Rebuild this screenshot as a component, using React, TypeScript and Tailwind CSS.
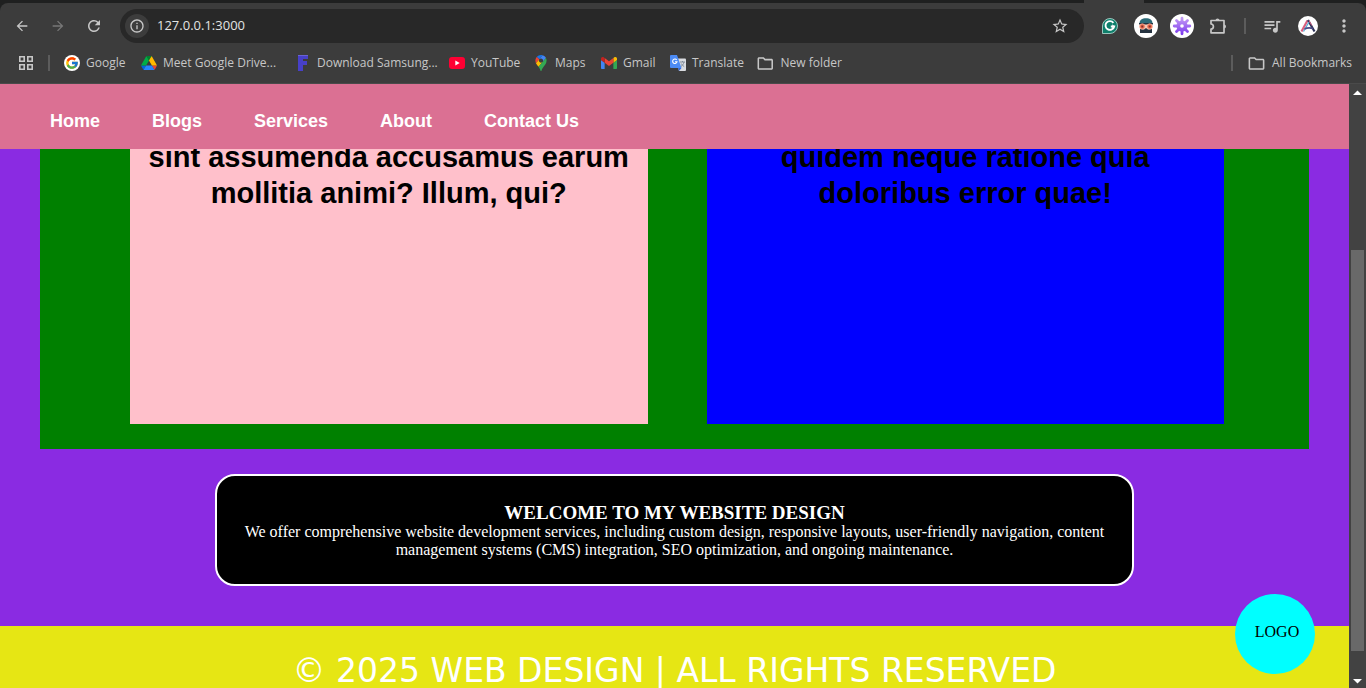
import React from "react";
import { FcGoogle } from "react-icons/fc";
import {
  MdArrowBack,
  MdArrowForward,
  MdInfoOutline,
  MdMoreVert,
  MdOutlineFolder,
  MdQueueMusic,
  MdRefresh,
  MdStarBorder,
} from "react-icons/md";

const GoogleIcon = () => (
  <span className="flex size-4 items-center justify-center rounded-full bg-white">
    <FcGoogle className="size-3.5" />
  </span>
);

const DriveIcon = () => (
  <svg viewBox="0 0 87.3 78" className="h-3.5 w-4" aria-hidden="true">
    <path fill="#0066da" d="m6.6 66.85 3.85 6.65c.8 1.4 1.95 2.5 3.3 3.3l13.75-23.8h-27.5c0 1.55.4 3.1 1.2 4.5z" />
    <path fill="#00ac47" d="m43.65 25-13.75-23.8c-1.35.8-2.5 1.9-3.3 3.3l-25.4 44a9.06 9.06 0 0 0 -1.2 4.5h27.5z" />
    <path fill="#ea4335" d="m73.55 76.8c1.35-.8 2.5-1.9 3.3-3.3l1.6-2.75 7.65-13.25c.8-1.4 1.2-2.95 1.2-4.5h-27.5l5.85 11.5z" />
    <path fill="#00832d" d="m43.65 25 13.75-23.8c-1.35-.8-2.9-1.2-4.5-1.2h-18.5c-1.6 0-3.15.45-4.5 1.2z" />
    <path fill="#2684fc" d="m59.8 53h-32.3l-13.75 23.8c1.35.8 2.9 1.2 4.5 1.2h50.8c1.6 0 3.15-.45 4.5-1.2z" />
    <path fill="#ffba00" d="m73.4 26.5-12.7-22c-.8-1.4-1.95-2.5-3.3-3.3l-13.75 23.8 16.15 28h27.45c0-1.55-.4-3.1-1.2-4.5z" />
  </svg>
);

const SamsungToolIcon = () => (
  <svg viewBox="0 0 16 16" className="size-4" aria-hidden="true">
    <path fill="#4740c8" d="M3 0h10v4H8v2h4v4H8v6H3z" />
    <path fill="#6a62d4" d="M3 0h10v1H3z" />
  </svg>
);

const YouTubeIcon = () => (
  <svg viewBox="0 0 16 12" className="h-3 w-4" aria-hidden="true">
    <rect width="16" height="12" rx="3" fill="#ff0033" />
    <path fill="#fff" d="m6.3 3.4 4.4 2.6-4.4 2.6z" />
  </svg>
);

const MapsIcon = () => (
  <svg viewBox="0 0 92.3 132.3" className="h-4 w-3" aria-hidden="true">
    <path fill="#1a73e8" d="M60.2 2.2C55.8.8 51 0 46.1 0 32 0 19.3 6.4 10.8 16.5l21.8 18.3z" />
    <path fill="#ea4335" d="M10.8 16.5C4.1 24.5 0 34.9 0 46.1c0 8.7 1.7 15.7 4.6 22l28-33.3z" />
    <path fill="#4285f4" d="M46.2 28.5c9.8 0 17.7 7.9 17.7 17.7 0 4.3-1.6 8.3-4.2 11.4 0 0 13.9-16.6 27.5-32.7-5.6-10.8-15.3-19-27-22.7L32.6 34.8c3.3-3.8 8.1-6.3 13.6-6.3" />
    <path fill="#fbbc04" d="M46.2 63.8c-9.8 0-17.7-7.9-17.7-17.7 0-4.3 1.5-8.3 4.1-11.3l-28 33.3c4.8 10.6 12.8 19.2 21 29.9l34.1-40.5c-3.3 3.9-8.1 6.3-13.5 6.3" />
    <path fill="#34a853" d="M59.1 109.2c15.4-24.1 33.3-35 33.3-63 0-7.7-1.9-14.9-5.2-21.3L25.6 98c2.6 3.4 5.3 7.3 7.9 11.3 9.4 14.5 6.8 23.1 12.8 23.1s3.4-8.7 12.8-23.2" />
  </svg>
);

const GmailIcon = () => (
  <svg viewBox="52 42 88 66" className="h-3 w-4" aria-hidden="true">
    <path fill="#4285f4" d="M58 108h14V74L52 59v43c0 3.32 2.69 6 6 6" />
    <path fill="#34a853" d="M120 108h14c3.32 0 6-2.69 6-6V59l-20 15" />
    <path fill="#fbbc04" d="M120 48v26l20-15v-8c0-7.42-8.47-11.65-14.4-7.2" />
    <path fill="#ea4335" d="M72 74V48l24 18 24-18v26L96 92" />
    <path fill="#c5221f" d="M52 51v8l20 15V48l-5.6-4.2c-5.94-4.45-14.4-.22-14.4 7.2" />
  </svg>
);

const TranslateIcon = () => (
  <svg viewBox="0 0 16 16" className="size-4" aria-hidden="true">
    <path fill="#dadce0" d="M6 3.5h9a1 1 0 0 1 1 1V15a1 1 0 0 1-1 1H9z" />
    <path fill="#3367d6" d="M8 13h3.5L9 16z" />
    <path fill="#4c8bf5" d="M1 0h6l4.5 13H1a1 1 0 0 1-1-1V1a1 1 0 0 1 1-1z" />
    <path d="M6.7 5A2.2 2.2 0 1 0 7 6.8H5" fill="none" stroke="#fff" strokeWidth="1.1" />
    <path d="M10 7h5M12.5 6v1M14 7c-.4 2-1.6 3.5-3 4.5M11.3 8.5c.6 1.3 1.6 2.4 2.9 3.1" fill="none" stroke="#7b8794" strokeWidth=".9" />
  </svg>
);

const AppsIcon = () => (
  <svg viewBox="0 0 14 14" className="size-3.5" fill="none" stroke="#c7c7c7" strokeWidth="1.6" aria-hidden="true">
    <path d="M.8.8h4.4v4.4H.8zM8.8.8h4.4v4.4H8.800zM.8 8.8h4.4v4.4H.8zM8.800 8.800h4.4v4.4H8.800z" />
  </svg>
);

const GrammarIcon = () => (
  <svg viewBox="0 0 16 16" className="size-4" aria-hidden="true">
    <path fill="#0f7f6b" stroke="#b9e0d8" strokeWidth=".8" d="M8 .5A7.5 7.5 0 1 1 8 15.5H.5V8A7.5 7.5 0 0 1 8 .5z" />
    <path d="M11.4 4.8A4.4 4.4 0 1 0 12.2 8.5H8.8" fill="none" stroke="#fff" strokeWidth="1.9" />
    <path d="M10 6.8 12.3 8.500 10 10.3" fill="none" stroke="#fff" strokeWidth="1" />
  </svg>
);

const FaceIcon = () => (
  <svg viewBox="0 0 24 24" className="size-6" aria-hidden="true">
    <circle cx="12" cy="12" r="12" fill="#fff" />
    <path fill="#f6cdbb" d="M6.500 9h11v6h-11z" />
    <path fill="#2d6b78" d="M5.500 9.500C5.500 6 8 4.300 12 4.300s6.500 1.700 6.500 5.200z" />
    <path fill="#25323f" d="M5 9h14v1.500H5z" />
    <path fill="#25323f" d="M6 19v-4l4 .5 2-1.500 2 1.500 4-.5v4z" />
    <circle cx="8.300" cy="12.500" r="2.700" fill="#ee6f50" stroke="#f3b49f" strokeWidth=".7" />
    <circle cx="15.700" cy="12.500" r="2.700" fill="#ee6f50" stroke="#f3b49f" strokeWidth=".7" />
    <path fill="#7e2f2c" d="M7.300 11.500h2v2h-2zM14.700 11.500h2v2h-2z" />
  </svg>
);

const GearIcon = () => (
  <svg viewBox="0 0 24 24" className="size-6" aria-hidden="true">
    <defs>
      <linearGradient id="gear" gradientUnits="userSpaceOnUse" x1="12" y1="4" x2="12" y2="20">
        <stop offset="0" stopColor="#c39af5" />
        <stop offset="1" stopColor="#7c3aed" />
      </linearGradient>
    </defs>
    <circle cx="12" cy="12" r="12" fill="#fff" />
    <path
      d="M12 4.200v15.600M4.200 12h15.600M6.500 6.500l11 11M17.500 6.500l-11 11"
      fill="none"
      stroke="url(#gear)"
      strokeWidth="2.800"
      strokeLinecap="round"
    />
    <circle cx="12" cy="12" r="5.600" fill="url(#gear)" />
    <circle cx="12" cy="12" r="1.800" fill="#fff" />
  </svg>
);

const PuzzleIcon = () => (
  <svg viewBox="0 0 18 18" className="size-[18px]" aria-hidden="true">
    <path
      d="M2 3.500h13v12.300H2v-3.600c3.200-.2 3.200-5 0-5.200z"
      fill="none"
      stroke="#c7c7c7"
      strokeWidth="1.700"
      strokeLinejoin="round"
    />
    <path fill="#c7c7c7" d="M6.500 3.500a2 2 0 0 1 4 0zM15 7.500a2 2 0 0 1 0 4z" />
  </svg>
);

const ProfileIcon = () => (
  <svg viewBox="0 0 20 20" className="size-5" aria-hidden="true">
    <circle cx="10" cy="10" r="10" fill="#fff" />
    <g fill="none" strokeWidth="2.200">
      <path d="M3.500 15.500 9.500 4.500" stroke="#d9607f" />
      <path d="M10 4l6.500 11.500" stroke="#2b3157" />
      <path d="M5.500 15.500 11 6" stroke="#56aed6" strokeWidth="1.300" />
      <path d="M11 4.500l2.800 5" stroke="#d9607f" strokeWidth="1" />
      <path d="M6.500 13c3-1.500 5.500-1.500 8.500-.5" stroke="#4b4a86" strokeWidth="1.800" />
    </g>
  </svg>
);

const FolderIcon = () => <MdOutlineFolder className="size-[19px] text-[#c7c7c7]" />;

const bookmarks = [
  { label: "Google", icon: <GoogleIcon />, width: "w-[77px]", gap: "gap-1.5" },
  { label: "Meet Google Drive...", icon: <DriveIcon />, width: "w-[154px]", gap: "gap-1.5" },
  { label: "Download Samsung...", icon: <SamsungToolIcon />, width: "w-[154px]", gap: "gap-1.5" },
  { label: "YouTube", icon: <YouTubeIcon />, width: "w-[86px]", gap: "gap-1.5" },
  { label: "Maps", icon: <MapsIcon />, width: "w-[66px]", gap: "gap-2" },
  { label: "Gmail", icon: <GmailIcon />, width: "w-[69px]", gap: "gap-1.5" },
  { label: "Translate", icon: <TranslateIcon />, width: "w-[86px]", gap: "gap-1.5" },
  { label: "New folder", icon: <FolderIcon />, width: "w-[86px]", gap: "gap-1.5" },
];

const links = ["Home", "Blogs", "Services", "About", "Contact Us"];

function BrowserBar() {
  return (
    <header className="shrink-0 bg-[#1f2020] font-['Open_Sans','Noto_Sans',sans-serif] text-[#c7c7c7]">
      <div className="flex h-[3px] justify-end pr-[222px]">
        <div className="w-[60px] bg-[#3c3c3c]" />
      </div>
      <div className="rounded-t-lg border-b border-[#4a4a4a] bg-[#3c3c3c]">
        <div className="flex h-[46px] items-center px-3">
          <div className="flex gap-4">
            <button aria-label="Back" className="flex size-5 items-center justify-center">
              <MdArrowBack className="size-4" />
            </button>
            <button aria-label="Forward" className="flex size-5 items-center justify-center text-[#777]">
              <MdArrowForward className="size-4" />
            </button>
            <button aria-label="Reload" className="flex size-5 items-center justify-center">
              <MdRefresh className="size-[18px]" />
            </button>
          </div>
          <div className="ml-4 flex h-[34px] flex-1 items-center rounded-full bg-[#282828] pr-[15px] pl-[5px]">
            <button aria-label="Site information" className="flex size-6 items-center justify-center rounded-full bg-[#3c3c3c]">
              <MdInfoOutline className="size-4" />
            </button>
            <input
              aria-label="Address"
              defaultValue="127.0.0.1:3000"
              className="ml-2 min-w-0 flex-1 bg-transparent text-[13px] text-[#e3e3e3] outline-none"
            />
            <button aria-label="Bookmark this page">
              <MdStarBorder className="size-[18px]" />
            </button>
          </div>
          <div className="ml-[14px] flex items-center gap-3">
            <button aria-label="Writing assistant" className="flex size-6 items-center justify-center"><GrammarIcon /></button>
            <button aria-label="Reader extension"><FaceIcon /></button>
            <button aria-label="Gear extension"><GearIcon /></button>
            <button aria-label="Extensions" className="flex size-6 items-center justify-center"><PuzzleIcon /></button>
          </div>
          <span className="ml-[14px] h-4 w-0.5 bg-[#5c5c5c]" />
          <button aria-label="Media controls" className="ml-4"><MdQueueMusic className="size-5" /></button>
          <button aria-label="Profile" className="ml-4"><ProfileIcon /></button>
          <button aria-label="Menu" className="ml-4"><MdMoreVert className="size-5" /></button>
        </div>
        <div className="flex h-[34px] items-start pr-[14px] pl-[19px] text-xs">
          <div className="flex h-[28px] w-full items-center">
            <button aria-label="Apps"><AppsIcon /></button>
            <span className="mr-3.5 ml-[15px] h-4 w-0.5 bg-[#5c5c5c]" />
            {bookmarks.map((b) => (
              <a key={b.label} href="#" className={`flex shrink-0 items-center whitespace-nowrap ${b.gap} ${b.width}`}>
                {b.icon}
                {b.label}
              </a>
            ))}
            <span className="mr-3.5 ml-auto h-4 w-0.5 bg-[#5c5c5c]" />
            <a href="#" className="flex items-center gap-1.5 whitespace-nowrap">
              <FolderIcon />
              All Bookmarks
            </a>
          </div>
        </div>
      </div>
    </header>
  );
}

function Scrollbar() {
  return (
    <div className="flex w-[17px] shrink-0 flex-col items-center bg-[#424242]" aria-hidden="true">
      <svg viewBox="0 0 17 17" className="size-[17px]"><path fill="#fff" d="M4 11h9L8.500 6.500z" /></svg>
      <div className="flex w-full flex-1 flex-col items-center">
        <div className="flex-[149]" />
        <div className="w-[13px] flex-[401] bg-[#696969]" />
        <div className="flex-[20]" />
      </div>
      <svg viewBox="0 0 17 17" className="size-[17px]"><path fill="#fff" d="M4 8h9l-4.500 4.500z" /></svg>
    </div>
  );
}

export default function App() {
  return (
    <div className="flex h-screen flex-col overflow-hidden">
      <BrowserBar />
      <div className="flex min-h-0 flex-1">
        <main className="relative flex min-w-0 flex-1 flex-col overflow-hidden bg-[#8a2be2] font-['Liberation_Serif',serif]">
          <nav className="z-10 flex h-[65px] shrink-0 items-center gap-[52px] bg-[#db7093] px-[50px] pt-2 font-['Liberation_Sans',sans-serif] text-lg font-bold text-white">
            {links.map((l) => (
              <a key={l} href="#">{l}</a>
            ))}
          </nav>
          <section className="mx-10 -mt-2.5 flex shrink-0 gap-[59px] bg-[#008000] pr-[85px] pb-[25px] pl-[90px] text-center font-['Liberation_Sans',sans-serif] text-[29px] leading-9 font-bold text-black">
            <h2 className="h-[285px] flex-1 bg-[#ffc0cb]">
              sint assumenda accusamus earum
              <br />
              mollitia animi? Illum, qui?
            </h2>
            <h2 className="h-[285px] flex-1 bg-[#0000ff]">
              quidem neque ratione quia
              <br />
              doloribus error quae!
            </h2>
          </section>
          <section className="mx-auto mt-[25px] mb-10 w-[919px] max-w-full shrink-0 rounded-[20px] border-2 border-white bg-black px-6 pt-[26px] pb-[25px] text-center text-white">
            <h3 className="text-[19px] leading-[21px] font-bold">WELCOME TO MY WEBSITE DESIGN</h3>
            <p className="text-base leading-[18px]">
              We offer comprehensive website development services, including custom design, responsive layouts, user-friendly navigation, content
              management systems (CMS) integration, SEO optimization, and ongoing maintenance.
            </p>
          </section>
          <footer className="flex-1 bg-[#e6e614] pt-7 text-center font-['DejaVu_Sans',sans-serif] text-[33px] leading-[34px] whitespace-nowrap text-white">
            © 2025 WEB DESIGN | ALL RIGHTS RESERVED
          </footer>
          <div className="absolute right-[34px] bottom-[14px] flex size-20 items-center justify-center rounded-full bg-[#00ffff] pb-1 pl-1 text-base text-black">
            LOGO
          </div>
        </main>
        <Scrollbar />
      </div>
    </div>
  );
}
